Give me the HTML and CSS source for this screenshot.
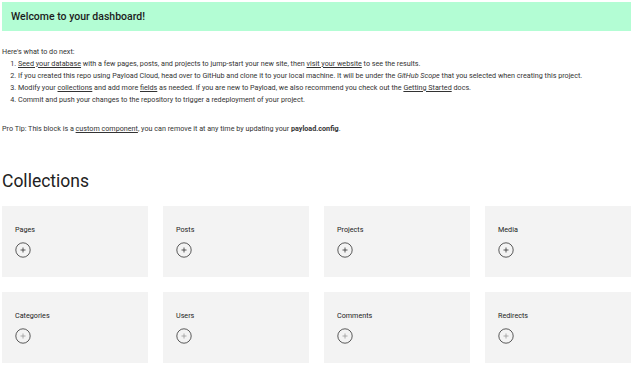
FILE: index.html
```html
<!DOCTYPE html>
<html lang="en">

<head>
    <meta charset="utf-8">
    <title>Dashboard</title>
    <meta name="viewport" content="width=device-width, initial-scale=1">
    <link rel="stylesheet" href="styles.css">
</head>

<body>
    <div class="dashboard">
        <div class="banner">
            <h4>Welcome to your dashboard!</h4>
        </div>
        <div class="intro">
            <p>Here's what to do next:</p>
            <ol>
                <li><a href="#">Seed your database</a> with a few pages, posts, and projects to jump-start your new site, then <a href="#">visit your website</a> to see the results.</li>
                <li>If you created this repo using Payload Cloud, head over to GitHub and clone it to your local machine. It will be under the <i>GitHub Scope</i> that you selected when creating this project.</li>
                <li>Modify your <a href="#">collections</a> and add more <a href="#">fields</a> as needed. If you are new to Payload, we also recommend you check out the <a href="#">Getting Started</a> docs.</li>
                <li>Commit and push your changes to the repository to trigger a redeployment of your project.</li>
            </ol>
            <p>Pro Tip: This block is a <a href="#">custom component</a>, you can remove it at any time by updating your <b>payload.config</b>.</p>
        </div>

        <h2 class="group-title">Collections</h2>
        <ul class="cards">
            <li class="card"><span class="card-title">Pages</span><button class="add" aria-label="Create new Pages"><svg viewBox="0 0 16 16"><circle cx="8" cy="8" r="7.2"/><path d="M8 5.5v5M5.5 8h5"/></svg></button></li>
            <li class="card"><span class="card-title">Posts</span><button class="add" aria-label="Create new Posts"><svg viewBox="0 0 16 16"><circle cx="8" cy="8" r="7.2"/><path d="M8 5.5v5M5.5 8h5"/></svg></button></li>
            <li class="card"><span class="card-title">Projects</span><button class="add" aria-label="Create new Projects"><svg viewBox="0 0 16 16"><circle cx="8" cy="8" r="7.2"/><path d="M8 5.5v5M5.5 8h5"/></svg></button></li>
            <li class="card"><span class="card-title">Media</span><button class="add" aria-label="Create new Media"><svg viewBox="0 0 16 16"><circle cx="8" cy="8" r="7.2"/><path d="M8 5.5v5M5.5 8h5"/></svg></button></li>
            <li class="card"><span class="card-title">Categories</span><button class="add light" aria-label="Create new Categories"><svg viewBox="0 0 16 16"><circle cx="8" cy="8" r="7.2"/><path d="M8 5.5v5M5.5 8h5"/></svg></button></li>
            <li class="card"><span class="card-title">Users</span><button class="add light" aria-label="Create new Users"><svg viewBox="0 0 16 16"><circle cx="8" cy="8" r="7.2"/><path d="M8 5.5v5M5.5 8h5"/></svg></button></li>
            <li class="card"><span class="card-title">Comments</span><button class="add light" aria-label="Create new Comments"><svg viewBox="0 0 16 16"><circle cx="8" cy="8" r="7.2"/><path d="M8 5.5v5M5.5 8h5"/></svg></button></li>
            <li class="card"><span class="card-title">Redirects</span><button class="add light" aria-label="Create new Redirects"><svg viewBox="0 0 16 16"><circle cx="8" cy="8" r="7.2"/><path d="M8 5.5v5M5.5 8h5"/></svg></button></li>
        </ul>
    </div>
</body>

</html>
```

FILE: styles.css
```css
body {
    margin: 0;
    font-family: Roboto, "Liberation Sans", Arial, sans-serif;
    font-size: 7.2px;
    color: #333333;
    background: #ffffff;
}

a {
    color: inherit;
}

.dashboard {
    padding: 2px 10px 0 2px;
}

/* welcome block */
.banner {
    background-color: #b3fdd4;
    height: 29px;
    padding: 0 9px;
    display: flex;
    align-items: center;
}

.banner h4 {
    margin: 0;
    font-size: 10.5px;
    font-weight: 500;
    color: #1c1c1c;
}

.intro {
    padding-top: 15px;
    line-height: 12px;
}

.intro p {
    margin: 0;
}

.intro ol {
    margin: 0 0 17px 0;
    padding-left: 16px;
}

/* collections */
.group-title {
    margin: 34px 0 0 0;
    font-size: 17.5px;
    font-weight: 400;
    line-height: 24px;
    color: #222222;
}

.cards {
    list-style: none;
    margin: 13px 0 0 0;
    padding: 0;
    display: grid;
    grid-template-columns: repeat(4, 1fr);
    gap: 15px;
}

.card {
    background-color: #f3f3f3;
    height: 71px;
    padding: 19px 13px 0 13px;
    box-sizing: border-box;
    display: flex;
    flex-direction: column;
    align-items: flex-start;
}

.card-title {
    font-size: 7.2px;
    line-height: 10px;
    color: #222;
}

.add {
    margin-top: 7px;
    padding: 0;
    border: 0;
    background: none;
    width: 16px;
    height: 16px;
}

.add svg {
    display: block;
    width: 16px;
    height: 16px;
    fill: none;
    stroke: #333;
    stroke-width: 0.8;
}

.add.light path {
    stroke: #999;
}
```
